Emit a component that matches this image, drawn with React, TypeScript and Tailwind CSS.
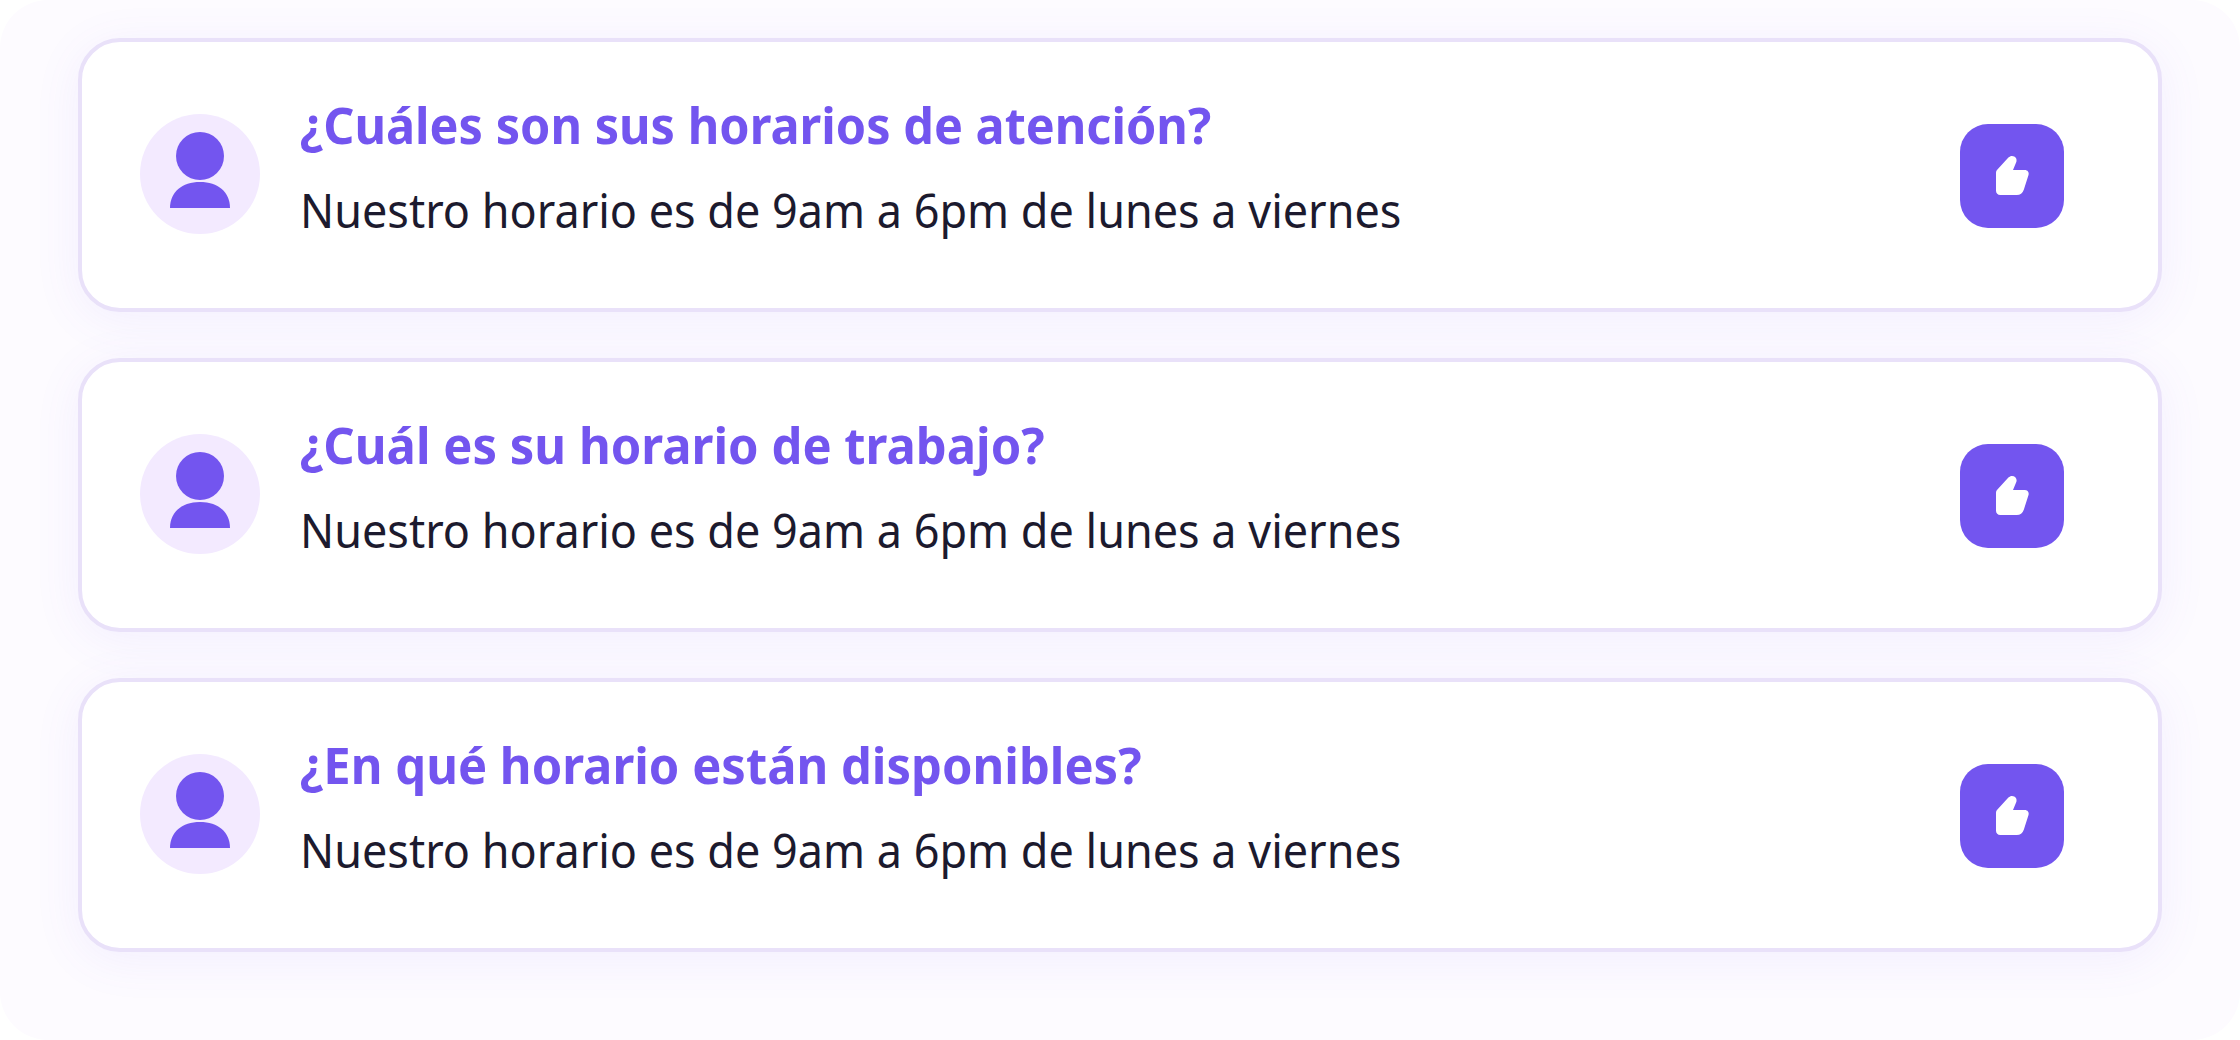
const ANSWER = "Nuestro horario es de 9am a 6pm de lunes a viernes";

const faqs = [
  { question: "¿Cuáles son sus horarios de atención?", fit: "scale-x-[0.953]" },
  { question: "¿Cuál es su horario de trabajo?", fit: "scale-x-[0.96]" },
  { question: "¿En qué horario están disponibles?", fit: "scale-x-[0.959]" },
];

function Avatar() {
  return (
    <div className="size-[120px] shrink-0 rounded-full bg-[#f3eaff]">
      <svg viewBox="0 0 120 120" className="size-full" fill="#7355ef">
        <circle cx="60" cy="42" r="24" />
        <path d="M30 94C30 78 42 68 60 68s30 10 30 26z" />
      </svg>
    </div>
  );
}

function LikeButton() {
  return (
    <button
      aria-label="Me gusta"
      className="size-[104px] shrink-0 rounded-[28px] bg-[#7355ef]"
    >
      <svg viewBox="0 0 104 104" className="size-full" fill="#fff">
        <path d="M36 48.800c0-1.200.4-2.200 1.200-3L48.400 33.600c1.100-1.100 2.200-1.600 3.600-1.600 3.200 0 5.300 2.800 4.400 5.700L53 46h11.700c2.900 0 4.600 2.300 3.800 5.100l-4.700 14.600c-1.100 3.400-3.700 5.300-7.100 5.300H40.300c-2.500 0-4.300-1.800-4.300-4.300z" />
      </svg>
    </button>
  );
}

export default function App() {
  return (
    <div className="h-[1040px] w-[2240px] overflow-hidden bg-white">
      <main className="flex h-full flex-col gap-[46px] rounded-[48px] bg-[#fdfbff] px-[78px] pt-[38px] font-['Noto_Sans',sans-serif]">
        {faqs.map(({ question, fit }) => (
          <article
            key={question}
            className="flex h-[274px] shrink-0 items-start rounded-[42px] border-4 border-[#e9e1f9] bg-white pl-[58px] pr-[94px] shadow-[0_8px_48px_rgba(115,85,239,0.08)]"
          >
            <div className="pt-[72px]">
              <Avatar />
            </div>
            <div className="flex flex-1 flex-col items-start pl-10 pt-12 whitespace-nowrap">
              <h2
                className={`origin-left text-[51px] leading-[68px] font-bold text-[#7355ef] ${fit}`}
              >
                {question}
              </h2>
              <p className="mt-[18px] origin-left scale-x-[0.957] text-[47px] leading-[68px] text-[#1c1a2e]">
                {ANSWER}
              </p>
            </div>
            <div className="pt-[82px]">
              <LikeButton />
            </div>
          </article>
        ))}
      </main>
    </div>
  );
}
